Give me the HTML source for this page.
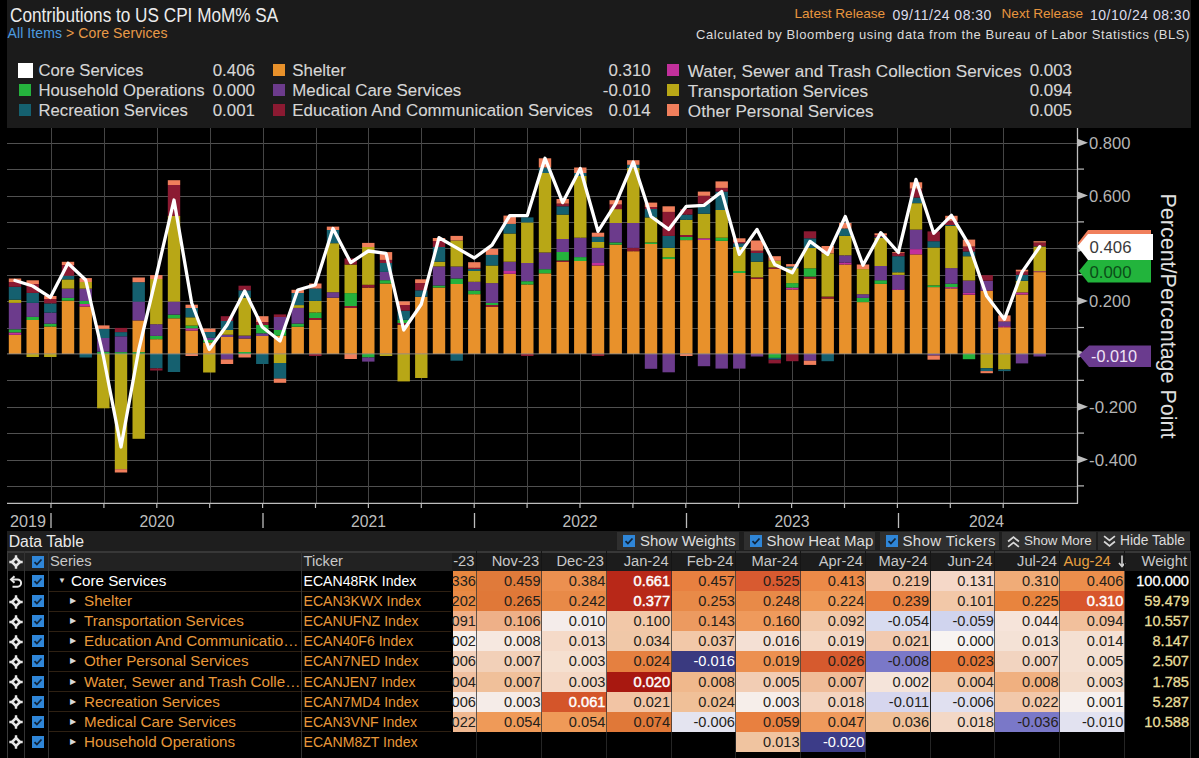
<!DOCTYPE html>
<html><head><meta charset="utf-8">
<style>
html,body{margin:0;padding:0;background:#000;width:1199px;height:758px;overflow:hidden;position:relative;font-family:"Liberation Sans",sans-serif;}
div{box-sizing:border-box;}
#hdr{position:absolute;left:7px;top:0;width:1184px;height:128px;background:#1b1b1b;}
.abs{position:absolute;white-space:nowrap;line-height:1;}
.sq{position:absolute;}
.lg{position:absolute;white-space:nowrap;font-size:16.9px;line-height:22px;color:#d6d6d6;-webkit-text-stroke:0.12px #d6d6d6;}
.lv{width:80px;text-align:right;}
#chart{position:absolute;left:0;top:0;}
#dtbar{position:absolute;left:7px;top:531px;width:1183px;height:20px;background:#1e1e1e;}
.btn{position:absolute;top:532px;height:18px;background:#2f2f2f;}
.bt{position:absolute;top:531px;line-height:20px;white-space:nowrap;color:#dcdcdc;}
.cb{position:absolute;width:12px;height:12px;background:#2f86d8;}
.cb svg{display:block}
.th{position:absolute;height:20px;line-height:20px;font-size:14.7px;color:#c8c8c8;white-space:nowrap;}
.thr{width:100px;text-align:right;}
.td{position:absolute;height:20px;line-height:20px;font-size:15.2px;white-space:nowrap;}
.tk{font-size:14.1px;}
.tv{position:absolute;width:100px;text-align:right;height:20px;line-height:20px;font-size:14.6px;white-space:nowrap;}
.tri{position:absolute;height:20px;line-height:20px;font-size:8px;color:#d8d8d8;}
.ic{position:absolute;height:20px;line-height:20px;font-size:16px;color:#e8e8e8;}
</style></head><body>
<div id="hdr"></div>
<div class="abs" style="left:9.5px;top:4.6px;font-size:20.5px;color:#ececec;letter-spacing:0px;transform:scaleX(0.838);transform-origin:0 0">Contributions to US CPI MoM% SA</div>
<div class="abs" style="left:7.5px;top:26px;font-size:14px;letter-spacing:0.1px"><span style="color:#4d9be0">All Items</span><span style="color:#e89a48"> &gt; Core Services</span></div>
<div class="abs" style="left:794.5px;top:7px;font-size:13.6px;color:#e8953e">Latest Release</div>
<div class="abs" style="left:892.5px;top:8px;font-size:14px;color:#dcdcec;letter-spacing:0.5px">09/11/24 08:30</div>
<div class="abs" style="left:1001.5px;top:7px;font-size:13.6px;color:#e8953e">Next Release</div>
<div class="abs" style="left:1090px;top:8px;font-size:14px;color:#dcdcec;letter-spacing:0.5px">10/10/24 08:30</div>
<div class="abs" style="left:696px;top:27.5px;font-size:13px;letter-spacing:0.585px;color:#dcdcdc">Calculated by Bloomberg using data from the Bureau of Labor Statistics (BLS)</div>
<div class="sq" style="left:17.5px;top:62.5px;width:15px;height:15px;background:#ffffff"></div>
<div class="lg" style="left:38.5px;top:59.5px;font-size:16.7px">Core Services</div>
<div class="lg lv" style="left:175px;top:59.5px">0.406</div>
<div class="sq" style="left:18.5px;top:84px;width:12px;height:12px;background:#25b23d"></div>
<div class="lg" style="left:38.5px;top:79.5px;font-size:16.7px">Household Operations</div>
<div class="lg lv" style="left:175px;top:79.5px">0.000</div>
<div class="sq" style="left:18.5px;top:104px;width:12px;height:12px;background:#15606f"></div>
<div class="lg" style="left:38.5px;top:99.5px;font-size:16.7px">Recreation Services</div>
<div class="lg lv" style="left:175px;top:99.5px">0.001</div>
<div class="sq" style="left:272.7px;top:64px;width:12px;height:12px;background:#e8912b"></div>
<div class="lg" style="left:292.3px;top:59.5px;font-size:16.9px">Shelter</div>
<div class="lg lv" style="left:570.7px;top:59.5px">0.310</div>
<div class="sq" style="left:272.7px;top:84px;width:12px;height:12px;background:#6c3b8c"></div>
<div class="lg" style="left:292.3px;top:79.5px;font-size:16.9px">Medical Care Services</div>
<div class="lg lv" style="left:570.7px;top:79.5px">-0.010</div>
<div class="sq" style="left:272.7px;top:104px;width:12px;height:12px;background:#8b1a32"></div>
<div class="lg" style="left:292.3px;top:99.5px;font-size:16.9px">Education And Communication Services</div>
<div class="lg lv" style="left:570.7px;top:99.5px">0.014</div>
<div class="sq" style="left:667.3px;top:64px;width:12px;height:12px;background:#c2309c"></div>
<div class="lg" style="left:687.8px;top:59.5px;font-size:17.15px">Water, Sewer and Trash Collection Services</div>
<div class="lg lv" style="left:992px;top:59.5px">0.003</div>
<div class="sq" style="left:667.3px;top:84px;width:12px;height:12px;background:#b8a716"></div>
<div class="lg" style="left:687.8px;top:79.5px;font-size:17.15px">Transportation Services</div>
<div class="lg lv" style="left:992px;top:79.5px">0.094</div>
<div class="sq" style="left:667.3px;top:104px;width:12px;height:12px;background:#f07f5c"></div>
<div class="lg" style="left:687.8px;top:99.5px;font-size:17.15px">Other Personal Services</div>
<div class="lg lv" style="left:992px;top:99.5px">0.005</div>
<svg id="chart" width="1199" height="758" viewBox="0 0 1199 758" style="font-family:'Liberation Sans',sans-serif">
<line x1="7" y1="486.5" x2="1077" y2="486.5" stroke="#505050" stroke-width="1"/>
<line x1="7" y1="460.5" x2="1077" y2="460.5" stroke="#505050" stroke-width="1"/>
<line x1="7" y1="433.5" x2="1077" y2="433.5" stroke="#505050" stroke-width="1"/>
<line x1="7" y1="407.5" x2="1077" y2="407.5" stroke="#505050" stroke-width="1"/>
<line x1="7" y1="380.5" x2="1077" y2="380.5" stroke="#505050" stroke-width="1"/>
<line x1="7" y1="328.5" x2="1077" y2="328.5" stroke="#505050" stroke-width="1"/>
<line x1="7" y1="301.5" x2="1077" y2="301.5" stroke="#505050" stroke-width="1"/>
<line x1="7" y1="275.5" x2="1077" y2="275.5" stroke="#505050" stroke-width="1"/>
<line x1="7" y1="248.5" x2="1077" y2="248.5" stroke="#505050" stroke-width="1"/>
<line x1="7" y1="222.5" x2="1077" y2="222.5" stroke="#505050" stroke-width="1"/>
<line x1="7" y1="196.5" x2="1077" y2="196.5" stroke="#505050" stroke-width="1"/>
<line x1="7" y1="169.5" x2="1077" y2="169.5" stroke="#505050" stroke-width="1"/>
<line x1="7" y1="143.5" x2="1077" y2="143.5" stroke="#505050" stroke-width="1"/>
<line x1="51.5" y1="128" x2="51.5" y2="503" stroke="#454545" stroke-width="1"/>
<line x1="104.5" y1="128" x2="104.5" y2="503" stroke="#454545" stroke-width="1"/>
<line x1="157.5" y1="128" x2="157.5" y2="503" stroke="#454545" stroke-width="1"/>
<line x1="210.5" y1="128" x2="210.5" y2="503" stroke="#454545" stroke-width="1"/>
<line x1="263.5" y1="128" x2="263.5" y2="503" stroke="#454545" stroke-width="1"/>
<line x1="316.5" y1="128" x2="316.5" y2="503" stroke="#454545" stroke-width="1"/>
<line x1="368.5" y1="128" x2="368.5" y2="503" stroke="#454545" stroke-width="1"/>
<line x1="421.5" y1="128" x2="421.5" y2="503" stroke="#454545" stroke-width="1"/>
<line x1="474.5" y1="128" x2="474.5" y2="503" stroke="#454545" stroke-width="1"/>
<line x1="527.5" y1="128" x2="527.5" y2="503" stroke="#454545" stroke-width="1"/>
<line x1="580.5" y1="128" x2="580.5" y2="503" stroke="#454545" stroke-width="1"/>
<line x1="633.5" y1="128" x2="633.5" y2="503" stroke="#454545" stroke-width="1"/>
<line x1="686.5" y1="128" x2="686.5" y2="503" stroke="#454545" stroke-width="1"/>
<line x1="739.5" y1="128" x2="739.5" y2="503" stroke="#454545" stroke-width="1"/>
<line x1="792.5" y1="128" x2="792.5" y2="503" stroke="#454545" stroke-width="1"/>
<line x1="844.5" y1="128" x2="844.5" y2="503" stroke="#454545" stroke-width="1"/>
<line x1="897.5" y1="128" x2="897.5" y2="503" stroke="#454545" stroke-width="1"/>
<line x1="950.5" y1="128" x2="950.5" y2="503" stroke="#454545" stroke-width="1"/>
<line x1="1003.5" y1="128" x2="1003.5" y2="503" stroke="#454545" stroke-width="1"/>
<rect x="8.8" y="334.8" width="12.4" height="19.1" fill="#e8912b"/>
<rect x="8.8" y="332.4" width="12.4" height="2.4" fill="#c2309c"/>
<rect x="8.8" y="329.3" width="12.4" height="3.1" fill="#25b23d"/>
<rect x="8.8" y="302.9" width="12.4" height="26.4" fill="#6c3b8c"/>
<rect x="8.8" y="299.7" width="12.4" height="3.2" fill="#b8a716"/>
<rect x="8.8" y="286.8" width="12.4" height="12.9" fill="#15606f"/>
<rect x="8.8" y="282.0" width="12.4" height="4.8" fill="#8b1a32"/>
<rect x="8.8" y="278.5" width="12.4" height="3.5" fill="#f07f5c"/>
<rect x="26.5" y="320.0" width="12.4" height="33.9" fill="#e8912b"/>
<rect x="26.5" y="316.9" width="12.4" height="3.1" fill="#25b23d"/>
<rect x="26.5" y="302.9" width="12.4" height="14.0" fill="#6c3b8c"/>
<rect x="26.5" y="292.9" width="12.4" height="10.0" fill="#15606f"/>
<rect x="26.5" y="284.0" width="12.4" height="8.9" fill="#8b1a32"/>
<rect x="26.5" y="280.3" width="12.4" height="3.7" fill="#f07f5c"/>
<rect x="26.5" y="353.9" width="12.4" height="3.1" fill="#b8a716"/>
<rect x="44.1" y="326.5" width="12.4" height="27.4" fill="#e8912b"/>
<rect x="44.1" y="323.7" width="12.4" height="2.8" fill="#25b23d"/>
<rect x="44.1" y="312.6" width="12.4" height="11.1" fill="#6c3b8c"/>
<rect x="44.1" y="303.4" width="12.4" height="9.2" fill="#15606f"/>
<rect x="44.1" y="299.0" width="12.4" height="4.4" fill="#8b1a32"/>
<rect x="44.1" y="296.0" width="12.4" height="3.0" fill="#f07f5c"/>
<rect x="44.1" y="353.9" width="12.4" height="3.1" fill="#b8a716"/>
<rect x="61.8" y="300.6" width="12.4" height="53.3" fill="#e8912b"/>
<rect x="61.8" y="297.9" width="12.4" height="2.7" fill="#25b23d"/>
<rect x="61.8" y="288.6" width="12.4" height="9.3" fill="#6c3b8c"/>
<rect x="61.8" y="279.4" width="12.4" height="9.2" fill="#b8a716"/>
<rect x="61.8" y="275.7" width="12.4" height="3.7" fill="#15606f"/>
<rect x="61.8" y="265.0" width="12.4" height="10.7" fill="#8b1a32"/>
<rect x="61.8" y="261.8" width="12.4" height="3.2" fill="#f07f5c"/>
<rect x="79.5" y="306.5" width="12.4" height="47.4" fill="#e8912b"/>
<rect x="79.5" y="304.0" width="12.4" height="2.5" fill="#c2309c"/>
<rect x="79.5" y="301.0" width="12.4" height="3.0" fill="#25b23d"/>
<rect x="79.5" y="288.6" width="12.4" height="12.4" fill="#6c3b8c"/>
<rect x="79.5" y="282.0" width="12.4" height="6.6" fill="#b8a716"/>
<rect x="79.5" y="278.1" width="12.4" height="3.9" fill="#f07f5c"/>
<rect x="79.5" y="353.9" width="12.4" height="3.6" fill="#15606f"/>
<rect x="97.1" y="351.7" width="12.4" height="2.2" fill="#25b23d"/>
<rect x="97.1" y="338.0" width="12.4" height="13.7" fill="#6c3b8c"/>
<rect x="97.1" y="328.8" width="12.4" height="9.2" fill="#15606f"/>
<rect x="97.1" y="325.4" width="12.4" height="3.4" fill="#f07f5c"/>
<rect x="97.1" y="353.9" width="12.4" height="54.4" fill="#b8a716"/>
<rect x="114.8" y="352.1" width="12.4" height="1.8" fill="#25b23d"/>
<rect x="114.8" y="336.3" width="12.4" height="15.8" fill="#6c3b8c"/>
<rect x="114.8" y="332.1" width="12.4" height="4.2" fill="#15606f"/>
<rect x="114.8" y="327.9" width="12.4" height="4.2" fill="#8b1a32"/>
<rect x="114.8" y="353.9" width="12.4" height="115.3" fill="#b8a716"/>
<rect x="114.8" y="469.2" width="12.4" height="3.3" fill="#f07f5c"/>
<rect x="132.5" y="352.1" width="12.4" height="1.8" fill="#25b23d"/>
<rect x="132.5" y="320.4" width="12.4" height="31.7" fill="#e8912b"/>
<rect x="132.5" y="301.6" width="12.4" height="18.8" fill="#6c3b8c"/>
<rect x="132.5" y="282.2" width="12.4" height="19.4" fill="#15606f"/>
<rect x="132.5" y="277.5" width="12.4" height="4.7" fill="#f07f5c"/>
<rect x="132.5" y="353.9" width="12.4" height="84.9" fill="#b8a716"/>
<rect x="150.1" y="339.2" width="12.4" height="14.7" fill="#e8912b"/>
<rect x="150.1" y="335.9" width="12.4" height="3.3" fill="#25b23d"/>
<rect x="150.1" y="324.2" width="12.4" height="11.7" fill="#6c3b8c"/>
<rect x="150.1" y="279.0" width="12.4" height="45.2" fill="#b8a716"/>
<rect x="150.1" y="275.1" width="12.4" height="3.9" fill="#f07f5c"/>
<rect x="150.1" y="353.9" width="12.4" height="14.5" fill="#15606f"/>
<rect x="150.1" y="368.4" width="12.4" height="2.1" fill="#8b1a32"/>
<rect x="167.8" y="318.3" width="12.4" height="35.6" fill="#e8912b"/>
<rect x="167.8" y="314.6" width="12.4" height="3.7" fill="#25b23d"/>
<rect x="167.8" y="301.6" width="12.4" height="13.0" fill="#6c3b8c"/>
<rect x="167.8" y="216.0" width="12.4" height="85.6" fill="#b8a716"/>
<rect x="167.8" y="185.0" width="12.4" height="31.0" fill="#8b1a32"/>
<rect x="167.8" y="180.2" width="12.4" height="4.8" fill="#f07f5c"/>
<rect x="167.8" y="353.9" width="12.4" height="18.1" fill="#15606f"/>
<rect x="185.5" y="330.5" width="12.4" height="23.4" fill="#e8912b"/>
<rect x="185.5" y="328.3" width="12.4" height="2.2" fill="#c2309c"/>
<rect x="185.5" y="325.6" width="12.4" height="2.7" fill="#25b23d"/>
<rect x="185.5" y="317.3" width="12.4" height="8.3" fill="#b8a716"/>
<rect x="185.5" y="308.0" width="12.4" height="9.3" fill="#15606f"/>
<rect x="185.5" y="304.7" width="12.4" height="3.3" fill="#f07f5c"/>
<rect x="185.5" y="353.9" width="12.4" height="2.1" fill="#f07f5c"/>
<rect x="203.1" y="342.5" width="12.4" height="11.4" fill="#e8912b"/>
<rect x="203.1" y="340.0" width="12.4" height="2.5" fill="#25b23d"/>
<rect x="203.1" y="337.8" width="12.4" height="2.2" fill="#6c3b8c"/>
<rect x="203.1" y="332.0" width="12.4" height="5.8" fill="#15606f"/>
<rect x="203.1" y="328.6" width="12.4" height="3.4" fill="#f07f5c"/>
<rect x="203.1" y="353.9" width="12.4" height="18.6" fill="#b8a716"/>
<rect x="220.8" y="337.0" width="12.4" height="16.9" fill="#e8912b"/>
<rect x="220.8" y="334.7" width="12.4" height="2.3" fill="#6c3b8c"/>
<rect x="220.8" y="330.0" width="12.4" height="4.7" fill="#b8a716"/>
<rect x="220.8" y="321.0" width="12.4" height="9.0" fill="#15606f"/>
<rect x="220.8" y="316.2" width="12.4" height="4.8" fill="#8b1a32"/>
<rect x="220.8" y="353.9" width="12.4" height="5.5" fill="#6c3b8c"/>
<rect x="220.8" y="359.4" width="12.4" height="4.6" fill="#f07f5c"/>
<rect x="238.5" y="352.0" width="12.4" height="1.9" fill="#25b23d"/>
<rect x="238.5" y="338.5" width="12.4" height="13.5" fill="#e8912b"/>
<rect x="238.5" y="335.6" width="12.4" height="2.9" fill="#6c3b8c"/>
<rect x="238.5" y="297.7" width="12.4" height="37.9" fill="#b8a716"/>
<rect x="238.5" y="290.3" width="12.4" height="7.4" fill="#15606f"/>
<rect x="238.5" y="285.7" width="12.4" height="4.6" fill="#8b1a32"/>
<rect x="238.5" y="353.9" width="12.4" height="3.6" fill="#f07f5c"/>
<rect x="256.1" y="336.0" width="12.4" height="17.9" fill="#e8912b"/>
<rect x="256.1" y="333.3" width="12.4" height="2.7" fill="#6c3b8c"/>
<rect x="256.1" y="325.0" width="12.4" height="8.3" fill="#25b23d"/>
<rect x="256.1" y="322.0" width="12.4" height="3.0" fill="#8b1a32"/>
<rect x="256.1" y="316.2" width="12.4" height="5.8" fill="#f07f5c"/>
<rect x="256.1" y="353.9" width="12.4" height="10.1" fill="#15606f"/>
<rect x="273.8" y="335.6" width="12.4" height="18.3" fill="#e8912b"/>
<rect x="273.8" y="330.0" width="12.4" height="5.6" fill="#25b23d"/>
<rect x="273.8" y="317.0" width="12.4" height="13.0" fill="#6c3b8c"/>
<rect x="273.8" y="314.4" width="12.4" height="2.6" fill="#8b1a32"/>
<rect x="273.8" y="353.9" width="12.4" height="9.1" fill="#b8a716"/>
<rect x="273.8" y="363.0" width="12.4" height="15.6" fill="#15606f"/>
<rect x="273.8" y="378.6" width="12.4" height="4.2" fill="#f07f5c"/>
<rect x="291.5" y="326.7" width="12.4" height="27.2" fill="#e8912b"/>
<rect x="291.5" y="323.6" width="12.4" height="3.1" fill="#25b23d"/>
<rect x="291.5" y="307.9" width="12.4" height="15.7" fill="#6c3b8c"/>
<rect x="291.5" y="305.1" width="12.4" height="2.8" fill="#b8a716"/>
<rect x="291.5" y="293.0" width="12.4" height="12.1" fill="#15606f"/>
<rect x="291.5" y="289.8" width="12.4" height="3.2" fill="#f07f5c"/>
<rect x="309.1" y="320.0" width="12.4" height="33.9" fill="#e8912b"/>
<rect x="309.1" y="318.0" width="12.4" height="2.0" fill="#8b1a32"/>
<rect x="309.1" y="312.5" width="12.4" height="5.5" fill="#25b23d"/>
<rect x="309.1" y="300.9" width="12.4" height="11.6" fill="#b8a716"/>
<rect x="309.1" y="288.5" width="12.4" height="12.4" fill="#15606f"/>
<rect x="309.1" y="283.5" width="12.4" height="5.0" fill="#f07f5c"/>
<rect x="309.1" y="353.9" width="12.4" height="2.1" fill="#8b1a32"/>
<rect x="326.8" y="297.7" width="12.4" height="56.2" fill="#e8912b"/>
<rect x="326.8" y="292.2" width="12.4" height="5.5" fill="#6c3b8c"/>
<rect x="326.8" y="243.2" width="12.4" height="49.0" fill="#b8a716"/>
<rect x="326.8" y="230.0" width="12.4" height="13.2" fill="#15606f"/>
<rect x="326.8" y="226.6" width="12.4" height="3.4" fill="#f07f5c"/>
<rect x="344.5" y="308.0" width="12.4" height="45.9" fill="#e8912b"/>
<rect x="344.5" y="306.0" width="12.4" height="2.0" fill="#8b1a32"/>
<rect x="344.5" y="293.1" width="12.4" height="12.9" fill="#25b23d"/>
<rect x="344.5" y="264.5" width="12.4" height="28.6" fill="#b8a716"/>
<rect x="344.5" y="258.4" width="12.4" height="6.1" fill="#8b1a32"/>
<rect x="344.5" y="353.9" width="12.4" height="5.1" fill="#f07f5c"/>
<rect x="362.1" y="287.6" width="12.4" height="66.3" fill="#e8912b"/>
<rect x="362.1" y="284.8" width="12.4" height="2.8" fill="#8b1a32"/>
<rect x="362.1" y="247.0" width="12.4" height="37.8" fill="#b8a716"/>
<rect x="362.1" y="242.9" width="12.4" height="4.1" fill="#f07f5c"/>
<rect x="362.1" y="353.9" width="12.4" height="3.6" fill="#25b23d"/>
<rect x="362.1" y="357.5" width="12.4" height="4.1" fill="#6c3b8c"/>
<rect x="379.8" y="283.5" width="12.4" height="70.4" fill="#e8912b"/>
<rect x="379.8" y="280.2" width="12.4" height="3.3" fill="#25b23d"/>
<rect x="379.8" y="271.9" width="12.4" height="8.3" fill="#6c3b8c"/>
<rect x="379.8" y="263.0" width="12.4" height="8.9" fill="#15606f"/>
<rect x="379.8" y="259.9" width="12.4" height="3.1" fill="#8b1a32"/>
<rect x="379.8" y="252.1" width="12.4" height="7.8" fill="#f07f5c"/>
<rect x="379.8" y="353.9" width="12.4" height="2.1" fill="#b8a716"/>
<rect x="397.5" y="325.0" width="12.4" height="28.9" fill="#e8912b"/>
<rect x="397.5" y="323.0" width="12.4" height="2.0" fill="#8b1a32"/>
<rect x="397.5" y="319.9" width="12.4" height="3.1" fill="#25b23d"/>
<rect x="397.5" y="310.7" width="12.4" height="9.2" fill="#15606f"/>
<rect x="397.5" y="305.0" width="12.4" height="5.7" fill="#8b1a32"/>
<rect x="397.5" y="301.4" width="12.4" height="3.6" fill="#f07f5c"/>
<rect x="397.5" y="353.9" width="12.4" height="27.5" fill="#b8a716"/>
<rect x="415.1" y="296.8" width="12.4" height="57.1" fill="#e8912b"/>
<rect x="415.1" y="290.3" width="12.4" height="6.5" fill="#15606f"/>
<rect x="415.1" y="283.0" width="12.4" height="7.3" fill="#8b1a32"/>
<rect x="415.1" y="279.3" width="12.4" height="3.7" fill="#f07f5c"/>
<rect x="415.1" y="353.9" width="12.4" height="24.1" fill="#b8a716"/>
<rect x="432.8" y="287.5" width="12.4" height="66.4" fill="#e8912b"/>
<rect x="432.8" y="285.5" width="12.4" height="2.0" fill="#25b23d"/>
<rect x="432.8" y="266.4" width="12.4" height="19.1" fill="#6c3b8c"/>
<rect x="432.8" y="261.7" width="12.4" height="4.7" fill="#b8a716"/>
<rect x="432.8" y="247.0" width="12.4" height="14.7" fill="#15606f"/>
<rect x="432.8" y="241.0" width="12.4" height="6.0" fill="#8b1a32"/>
<rect x="432.8" y="238.0" width="12.4" height="3.0" fill="#f07f5c"/>
<rect x="450.5" y="284.0" width="12.4" height="69.9" fill="#e8912b"/>
<rect x="450.5" y="278.5" width="12.4" height="5.5" fill="#25b23d"/>
<rect x="450.5" y="266.5" width="12.4" height="12.0" fill="#6c3b8c"/>
<rect x="450.5" y="240.5" width="12.4" height="26.0" fill="#b8a716"/>
<rect x="450.5" y="235.9" width="12.4" height="4.6" fill="#f07f5c"/>
<rect x="450.5" y="353.9" width="12.4" height="6.8" fill="#15606f"/>
<rect x="468.1" y="294.2" width="12.4" height="59.7" fill="#e8912b"/>
<rect x="468.1" y="290.5" width="12.4" height="3.7" fill="#25b23d"/>
<rect x="468.1" y="281.8" width="12.4" height="8.7" fill="#6c3b8c"/>
<rect x="468.1" y="271.0" width="12.4" height="10.8" fill="#b8a716"/>
<rect x="468.1" y="269.0" width="12.4" height="2.0" fill="#15606f"/>
<rect x="468.1" y="267.8" width="12.4" height="1.2" fill="#8b1a32"/>
<rect x="468.1" y="262.2" width="12.4" height="5.6" fill="#f07f5c"/>
<rect x="485.8" y="307.0" width="12.4" height="46.9" fill="#e8912b"/>
<rect x="485.8" y="305.0" width="12.4" height="2.0" fill="#8b1a32"/>
<rect x="485.8" y="302.9" width="12.4" height="2.1" fill="#25b23d"/>
<rect x="485.8" y="283.1" width="12.4" height="19.8" fill="#6c3b8c"/>
<rect x="485.8" y="265.5" width="12.4" height="17.6" fill="#b8a716"/>
<rect x="485.8" y="254.9" width="12.4" height="10.6" fill="#15606f"/>
<rect x="485.8" y="248.8" width="12.4" height="6.1" fill="#f07f5c"/>
<rect x="503.5" y="273.8" width="12.4" height="80.1" fill="#e8912b"/>
<rect x="503.5" y="271.0" width="12.4" height="2.8" fill="#c2309c"/>
<rect x="503.5" y="261.7" width="12.4" height="9.3" fill="#6c3b8c"/>
<rect x="503.5" y="233.5" width="12.4" height="28.2" fill="#b8a716"/>
<rect x="503.5" y="223.9" width="12.4" height="9.6" fill="#15606f"/>
<rect x="503.5" y="215.6" width="12.4" height="8.3" fill="#f07f5c"/>
<rect x="521.1" y="284.4" width="12.4" height="69.5" fill="#e8912b"/>
<rect x="521.1" y="281.2" width="12.4" height="3.2" fill="#25b23d"/>
<rect x="521.1" y="263.0" width="12.4" height="18.2" fill="#6c3b8c"/>
<rect x="521.1" y="222.4" width="12.4" height="40.6" fill="#b8a716"/>
<rect x="521.1" y="217.4" width="12.4" height="5.0" fill="#15606f"/>
<rect x="521.1" y="353.9" width="12.4" height="2.1" fill="#8b1a32"/>
<rect x="538.8" y="273.3" width="12.4" height="80.6" fill="#e8912b"/>
<rect x="538.8" y="269.2" width="12.4" height="4.1" fill="#25b23d"/>
<rect x="538.8" y="252.5" width="12.4" height="16.7" fill="#6c3b8c"/>
<rect x="538.8" y="173.0" width="12.4" height="79.5" fill="#b8a716"/>
<rect x="538.8" y="167.5" width="12.4" height="5.5" fill="#15606f"/>
<rect x="538.8" y="158.3" width="12.4" height="9.2" fill="#f07f5c"/>
<rect x="556.5" y="262.0" width="12.4" height="91.9" fill="#e8912b"/>
<rect x="556.5" y="260.5" width="12.4" height="1.5" fill="#8b1a32"/>
<rect x="556.5" y="252.0" width="12.4" height="8.5" fill="#25b23d"/>
<rect x="556.5" y="239.0" width="12.4" height="13.0" fill="#6c3b8c"/>
<rect x="556.5" y="214.6" width="12.4" height="24.4" fill="#b8a716"/>
<rect x="556.5" y="206.3" width="12.4" height="8.3" fill="#15606f"/>
<rect x="556.5" y="203.6" width="12.4" height="2.7" fill="#8b1a32"/>
<rect x="556.5" y="199.0" width="12.4" height="4.6" fill="#f07f5c"/>
<rect x="574.1" y="261.0" width="12.4" height="92.9" fill="#e8912b"/>
<rect x="574.1" y="257.1" width="12.4" height="3.9" fill="#25b23d"/>
<rect x="574.1" y="237.7" width="12.4" height="19.4" fill="#6c3b8c"/>
<rect x="574.1" y="176.0" width="12.4" height="61.7" fill="#b8a716"/>
<rect x="574.1" y="173.0" width="12.4" height="3.0" fill="#15606f"/>
<rect x="574.1" y="167.5" width="12.4" height="5.5" fill="#f07f5c"/>
<rect x="591.8" y="265.5" width="12.4" height="88.4" fill="#e8912b"/>
<rect x="591.8" y="263.0" width="12.4" height="2.5" fill="#c2309c"/>
<rect x="591.8" y="247.9" width="12.4" height="15.1" fill="#6c3b8c"/>
<rect x="591.8" y="242.0" width="12.4" height="5.9" fill="#b8a716"/>
<rect x="591.8" y="236.8" width="12.4" height="5.2" fill="#15606f"/>
<rect x="591.8" y="232.7" width="12.4" height="4.1" fill="#f07f5c"/>
<rect x="591.8" y="353.9" width="12.4" height="2.1" fill="#8b1a32"/>
<rect x="609.5" y="244.6" width="12.4" height="109.3" fill="#e8912b"/>
<rect x="609.5" y="242.4" width="12.4" height="2.2" fill="#25b23d"/>
<rect x="609.5" y="223.0" width="12.4" height="19.4" fill="#6c3b8c"/>
<rect x="609.5" y="209.1" width="12.4" height="13.9" fill="#b8a716"/>
<rect x="609.5" y="204.5" width="12.4" height="4.6" fill="#8b1a32"/>
<rect x="609.5" y="200.2" width="12.4" height="4.3" fill="#f07f5c"/>
<rect x="627.1" y="251.2" width="12.4" height="102.7" fill="#e8912b"/>
<rect x="627.1" y="247.9" width="12.4" height="3.3" fill="#8b1a32"/>
<rect x="627.1" y="223.0" width="12.4" height="24.9" fill="#6c3b8c"/>
<rect x="627.1" y="168.0" width="12.4" height="55.0" fill="#b8a716"/>
<rect x="627.1" y="164.8" width="12.4" height="3.2" fill="#15606f"/>
<rect x="627.1" y="160.2" width="12.4" height="4.6" fill="#f07f5c"/>
<rect x="644.8" y="244.0" width="12.4" height="109.9" fill="#e8912b"/>
<rect x="644.8" y="242.4" width="12.4" height="1.6" fill="#25b23d"/>
<rect x="644.8" y="217.4" width="12.4" height="25.0" fill="#b8a716"/>
<rect x="644.8" y="209.0" width="12.4" height="8.4" fill="#15606f"/>
<rect x="644.8" y="207.0" width="12.4" height="2.0" fill="#8b1a32"/>
<rect x="644.8" y="202.6" width="12.4" height="4.4" fill="#f07f5c"/>
<rect x="644.8" y="353.9" width="12.4" height="14.9" fill="#6c3b8c"/>
<rect x="662.5" y="259.0" width="12.4" height="94.9" fill="#e8912b"/>
<rect x="662.5" y="257.1" width="12.4" height="1.9" fill="#25b23d"/>
<rect x="662.5" y="247.9" width="12.4" height="9.2" fill="#b8a716"/>
<rect x="662.5" y="235.9" width="12.4" height="12.0" fill="#15606f"/>
<rect x="662.5" y="211.9" width="12.4" height="24.0" fill="#8b1a32"/>
<rect x="662.5" y="206.3" width="12.4" height="5.6" fill="#f07f5c"/>
<rect x="662.5" y="353.9" width="12.4" height="18.4" fill="#6c3b8c"/>
<rect x="680.1" y="240.1" width="12.4" height="113.8" fill="#e8912b"/>
<rect x="680.1" y="237.0" width="12.4" height="3.1" fill="#25b23d"/>
<rect x="680.1" y="235.0" width="12.4" height="2.0" fill="#8b1a32"/>
<rect x="680.1" y="219.8" width="12.4" height="15.2" fill="#b8a716"/>
<rect x="680.1" y="214.6" width="12.4" height="5.2" fill="#15606f"/>
<rect x="680.1" y="209.1" width="12.4" height="5.5" fill="#8b1a32"/>
<rect x="680.1" y="353.9" width="12.4" height="2.1" fill="#f07f5c"/>
<rect x="697.8" y="240.0" width="12.4" height="113.9" fill="#e8912b"/>
<rect x="697.8" y="238.3" width="12.4" height="1.7" fill="#c2309c"/>
<rect x="697.8" y="213.7" width="12.4" height="24.6" fill="#b8a716"/>
<rect x="697.8" y="203.6" width="12.4" height="10.1" fill="#15606f"/>
<rect x="697.8" y="195.8" width="12.4" height="7.8" fill="#8b1a32"/>
<rect x="697.8" y="191.6" width="12.4" height="4.2" fill="#f07f5c"/>
<rect x="697.8" y="353.9" width="12.4" height="12.3" fill="#6c3b8c"/>
<rect x="715.5" y="240.9" width="12.4" height="113.0" fill="#e8912b"/>
<rect x="715.5" y="237.7" width="12.4" height="3.2" fill="#25b23d"/>
<rect x="715.5" y="210.0" width="12.4" height="27.7" fill="#b8a716"/>
<rect x="715.5" y="191.6" width="12.4" height="18.4" fill="#15606f"/>
<rect x="715.5" y="187.9" width="12.4" height="3.7" fill="#8b1a32"/>
<rect x="715.5" y="181.4" width="12.4" height="6.5" fill="#f07f5c"/>
<rect x="715.5" y="353.9" width="12.4" height="14.7" fill="#6c3b8c"/>
<rect x="733.1" y="273.0" width="12.4" height="80.9" fill="#e8912b"/>
<rect x="733.1" y="271.0" width="12.4" height="2.0" fill="#25b23d"/>
<rect x="733.1" y="247.0" width="12.4" height="24.0" fill="#b8a716"/>
<rect x="733.1" y="243.3" width="12.4" height="3.7" fill="#15606f"/>
<rect x="733.1" y="242.0" width="12.4" height="1.3" fill="#8b1a32"/>
<rect x="733.1" y="238.3" width="12.4" height="3.7" fill="#f07f5c"/>
<rect x="733.1" y="353.9" width="12.4" height="14.7" fill="#6c3b8c"/>
<rect x="750.8" y="279.0" width="12.4" height="74.9" fill="#e8912b"/>
<rect x="750.8" y="277.4" width="12.4" height="1.6" fill="#8b1a32"/>
<rect x="750.8" y="261.7" width="12.4" height="15.7" fill="#b8a716"/>
<rect x="750.8" y="253.0" width="12.4" height="8.7" fill="#15606f"/>
<rect x="750.8" y="250.7" width="12.4" height="2.3" fill="#8b1a32"/>
<rect x="750.8" y="240.5" width="12.4" height="10.2" fill="#f07f5c"/>
<rect x="750.8" y="353.9" width="12.4" height="2.6" fill="#6c3b8c"/>
<rect x="768.5" y="269.0" width="12.4" height="84.9" fill="#e8912b"/>
<rect x="768.5" y="267.4" width="12.4" height="1.6" fill="#8b1a32"/>
<rect x="768.5" y="260.8" width="12.4" height="6.6" fill="#b8a716"/>
<rect x="768.5" y="256.2" width="12.4" height="4.6" fill="#f07f5c"/>
<rect x="768.5" y="353.9" width="12.4" height="4.0" fill="#25b23d"/>
<rect x="768.5" y="357.9" width="12.4" height="1.8" fill="#15606f"/>
<rect x="768.5" y="359.7" width="12.4" height="3.7" fill="#8b1a32"/>
<rect x="786.1" y="289.5" width="12.4" height="64.4" fill="#e8912b"/>
<rect x="786.1" y="287.6" width="12.4" height="1.9" fill="#c2309c"/>
<rect x="786.1" y="283.1" width="12.4" height="4.5" fill="#25b23d"/>
<rect x="786.1" y="268.2" width="12.4" height="14.9" fill="#b8a716"/>
<rect x="786.1" y="266.5" width="12.4" height="1.7" fill="#15606f"/>
<rect x="786.1" y="264.1" width="12.4" height="2.4" fill="#f07f5c"/>
<rect x="786.1" y="353.9" width="12.4" height="7.3" fill="#8b1a32"/>
<rect x="803.8" y="278.5" width="12.4" height="75.4" fill="#e8912b"/>
<rect x="803.8" y="276.6" width="12.4" height="1.9" fill="#8b1a32"/>
<rect x="803.8" y="268.3" width="12.4" height="8.3" fill="#25b23d"/>
<rect x="803.8" y="247.9" width="12.4" height="20.4" fill="#b8a716"/>
<rect x="803.8" y="238.3" width="12.4" height="9.6" fill="#15606f"/>
<rect x="803.8" y="231.3" width="12.4" height="7.0" fill="#8b1a32"/>
<rect x="803.8" y="353.9" width="12.4" height="6.8" fill="#6c3b8c"/>
<rect x="803.8" y="360.7" width="12.4" height="4.2" fill="#f07f5c"/>
<rect x="821.5" y="298.5" width="12.4" height="55.4" fill="#e8912b"/>
<rect x="821.5" y="296.6" width="12.4" height="1.9" fill="#8b1a32"/>
<rect x="821.5" y="253.4" width="12.4" height="43.2" fill="#b8a716"/>
<rect x="821.5" y="246.0" width="12.4" height="7.4" fill="#f07f5c"/>
<rect x="821.5" y="353.9" width="12.4" height="7.3" fill="#15606f"/>
<rect x="839.1" y="264.5" width="12.4" height="89.4" fill="#e8912b"/>
<rect x="839.1" y="262.5" width="12.4" height="2.0" fill="#c2309c"/>
<rect x="839.1" y="255.3" width="12.4" height="7.2" fill="#6c3b8c"/>
<rect x="839.1" y="235.9" width="12.4" height="19.4" fill="#b8a716"/>
<rect x="839.1" y="228.5" width="12.4" height="7.4" fill="#15606f"/>
<rect x="839.1" y="223.0" width="12.4" height="5.5" fill="#f07f5c"/>
<rect x="856.8" y="302.1" width="12.4" height="51.8" fill="#e8912b"/>
<rect x="856.8" y="297.9" width="12.4" height="4.2" fill="#25b23d"/>
<rect x="856.8" y="294.2" width="12.4" height="3.7" fill="#6c3b8c"/>
<rect x="856.8" y="269.1" width="12.4" height="25.1" fill="#b8a716"/>
<rect x="856.8" y="264.5" width="12.4" height="4.6" fill="#f07f5c"/>
<rect x="874.5" y="283.9" width="12.4" height="70.0" fill="#e8912b"/>
<rect x="874.5" y="280.2" width="12.4" height="3.7" fill="#25b23d"/>
<rect x="874.5" y="266.0" width="12.4" height="14.3" fill="#6c3b8c"/>
<rect x="874.5" y="238.0" width="12.4" height="28.0" fill="#b8a716"/>
<rect x="874.5" y="237.2" width="12.4" height="0.8" fill="#15606f"/>
<rect x="874.5" y="235.1" width="12.4" height="2.1" fill="#8b1a32"/>
<rect x="874.5" y="233.3" width="12.4" height="1.8" fill="#f07f5c"/>
<rect x="892.2" y="290.0" width="12.4" height="63.9" fill="#e8912b"/>
<rect x="892.2" y="289.2" width="12.4" height="0.8" fill="#c2309c"/>
<rect x="892.2" y="275.0" width="12.4" height="14.3" fill="#6c3b8c"/>
<rect x="892.2" y="272.3" width="12.4" height="2.6" fill="#b8a716"/>
<rect x="892.2" y="256.2" width="12.4" height="16.1" fill="#15606f"/>
<rect x="892.2" y="252.8" width="12.4" height="3.4" fill="#8b1a32"/>
<rect x="892.2" y="252.0" width="12.4" height="0.8" fill="#f07f5c"/>
<rect x="909.8" y="254.4" width="12.4" height="99.5" fill="#e8912b"/>
<rect x="909.8" y="249.1" width="12.4" height="5.3" fill="#c2309c"/>
<rect x="909.8" y="229.6" width="12.4" height="19.5" fill="#6c3b8c"/>
<rect x="909.8" y="203.2" width="12.4" height="26.4" fill="#b8a716"/>
<rect x="909.8" y="197.6" width="12.4" height="5.5" fill="#15606f"/>
<rect x="909.8" y="188.6" width="12.4" height="9.0" fill="#8b1a32"/>
<rect x="909.8" y="182.3" width="12.4" height="6.3" fill="#f07f5c"/>
<rect x="927.5" y="287.1" width="12.4" height="66.8" fill="#e8912b"/>
<rect x="927.5" y="285.3" width="12.4" height="1.8" fill="#25b23d"/>
<rect x="927.5" y="353.9" width="12.4" height="1.6" fill="#6c3b8c"/>
<rect x="927.5" y="247.5" width="12.4" height="37.8" fill="#b8a716"/>
<rect x="927.5" y="241.2" width="12.4" height="6.3" fill="#15606f"/>
<rect x="927.5" y="231.4" width="12.4" height="9.8" fill="#8b1a32"/>
<rect x="927.5" y="355.5" width="12.4" height="4.2" fill="#f07f5c"/>
<rect x="945.2" y="288.4" width="12.4" height="65.5" fill="#e8912b"/>
<rect x="945.2" y="287.1" width="12.4" height="1.3" fill="#c2309c"/>
<rect x="945.2" y="283.7" width="12.4" height="3.4" fill="#25b23d"/>
<rect x="945.2" y="268.1" width="12.4" height="15.6" fill="#6c3b8c"/>
<rect x="945.2" y="225.9" width="12.4" height="42.2" fill="#b8a716"/>
<rect x="945.2" y="225.1" width="12.4" height="0.8" fill="#15606f"/>
<rect x="945.2" y="220.8" width="12.4" height="4.2" fill="#8b1a32"/>
<rect x="945.2" y="215.8" width="12.4" height="5.0" fill="#f07f5c"/>
<rect x="962.8" y="294.8" width="12.4" height="59.1" fill="#e8912b"/>
<rect x="962.8" y="292.9" width="12.4" height="1.8" fill="#c2309c"/>
<rect x="962.8" y="353.9" width="12.4" height="5.3" fill="#25b23d"/>
<rect x="962.8" y="280.5" width="12.4" height="12.4" fill="#6c3b8c"/>
<rect x="962.8" y="256.2" width="12.4" height="24.3" fill="#b8a716"/>
<rect x="962.8" y="251.5" width="12.4" height="4.8" fill="#15606f"/>
<rect x="962.8" y="246.5" width="12.4" height="5.0" fill="#8b1a32"/>
<rect x="962.8" y="239.6" width="12.4" height="6.9" fill="#f07f5c"/>
<rect x="980.5" y="290.8" width="12.4" height="63.1" fill="#e8912b"/>
<rect x="980.5" y="290.3" width="12.4" height="0.5" fill="#c2309c"/>
<rect x="980.5" y="280.8" width="12.4" height="9.5" fill="#6c3b8c"/>
<rect x="980.5" y="353.9" width="12.4" height="14.3" fill="#b8a716"/>
<rect x="980.5" y="368.2" width="12.4" height="2.9" fill="#15606f"/>
<rect x="980.5" y="275.2" width="12.4" height="5.5" fill="#8b1a32"/>
<rect x="980.5" y="371.1" width="12.4" height="2.1" fill="#f07f5c"/>
<rect x="998.2" y="327.2" width="12.4" height="26.7" fill="#e8912b"/>
<rect x="998.2" y="326.2" width="12.4" height="1.1" fill="#c2309c"/>
<rect x="998.2" y="321.4" width="12.4" height="4.8" fill="#6c3b8c"/>
<rect x="998.2" y="353.9" width="12.4" height="15.6" fill="#b8a716"/>
<rect x="998.2" y="369.5" width="12.4" height="1.6" fill="#15606f"/>
<rect x="998.2" y="315.4" width="12.4" height="6.1" fill="#f07f5c"/>
<rect x="1015.8" y="294.5" width="12.4" height="59.4" fill="#e8912b"/>
<rect x="1015.8" y="292.4" width="12.4" height="2.1" fill="#c2309c"/>
<rect x="1015.8" y="353.9" width="12.4" height="9.5" fill="#6c3b8c"/>
<rect x="1015.8" y="280.8" width="12.4" height="11.6" fill="#b8a716"/>
<rect x="1015.8" y="275.0" width="12.4" height="5.8" fill="#15606f"/>
<rect x="1015.8" y="271.5" width="12.4" height="3.4" fill="#8b1a32"/>
<rect x="1015.8" y="269.7" width="12.4" height="1.8" fill="#f07f5c"/>
<rect x="1033.5" y="272.1" width="12.4" height="81.8" fill="#e8912b"/>
<rect x="1033.5" y="271.3" width="12.4" height="0.8" fill="#c2309c"/>
<rect x="1033.5" y="353.9" width="12.4" height="2.6" fill="#6c3b8c"/>
<rect x="1033.5" y="246.5" width="12.4" height="24.8" fill="#b8a716"/>
<rect x="1033.5" y="246.2" width="12.4" height="0.3" fill="#15606f"/>
<rect x="1033.5" y="242.5" width="12.4" height="3.7" fill="#8b1a32"/>
<rect x="1033.5" y="241.2" width="12.4" height="1.3" fill="#f07f5c"/>
<line x1="7" y1="353.9" x2="1077" y2="353.9" stroke="#9a9a9a" stroke-width="1" opacity="0.8"/>
<polyline points="15.0,280.5 32.7,286.0 50.3,297.4 68.0,263.3 85.7,280.0 103.3,356.0 121.0,447.0 138.7,350.0 156.3,276.0 174.0,200.0 191.7,303.0 209.3,349.5 227.0,325.0 244.7,291.0 262.3,327.0 280.0,341.0 297.7,290.0 315.3,284.8 333.0,228.5 350.7,262.6 368.3,251.0 386.0,253.4 403.7,330.0 421.3,304.2 439.0,237.7 456.7,247.9 474.3,258.0 492.0,245.1 509.7,215.6 527.3,215.6 545.0,158.3 562.7,202.6 580.3,168.5 598.0,231.3 615.7,203.6 633.3,162.0 651.0,216.5 668.7,229.4 686.3,206.3 704.0,205.4 721.7,191.6 739.3,254.4 757.0,229.4 774.7,264.5 792.3,272.8 810.0,241.4 827.7,254.4 845.3,216.5 863.0,265.2 880.7,232.7 898.4,252.5 916.0,179.4 933.7,233.3 951.4,215.3 969.0,244.9 986.7,296.1 1004.4,319.3 1022.0,272.1 1039.7,246.7" fill="none" stroke="#ffffff" stroke-width="3.3" stroke-linejoin="round" stroke-linecap="round"/>
<line x1="1077.5" y1="128" x2="1077.5" y2="503.5" stroke="#bdbdbd" stroke-width="1.3"/>
<line x1="7" y1="503.3" x2="1078" y2="503.3" stroke="#bdbdbd" stroke-width="1.3"/>
<line x1="1077" y1="485.9" x2="1084" y2="485.9" stroke="#bdbdbd" stroke-width="1.2"/>
<polygon points="1077.5,455.5 1088,459.5 1077.5,463.5" fill="#bdbdbd"/>
<line x1="1077" y1="433.1" x2="1084" y2="433.1" stroke="#bdbdbd" stroke-width="1.2"/>
<polygon points="1077.5,402.7 1088,406.7 1077.5,410.7" fill="#bdbdbd"/>
<line x1="1077" y1="380.3" x2="1084" y2="380.3" stroke="#bdbdbd" stroke-width="1.2"/>
<polygon points="1077.5,349.9 1088,353.9 1077.5,357.9" fill="#bdbdbd"/>
<line x1="1077" y1="327.5" x2="1084" y2="327.5" stroke="#bdbdbd" stroke-width="1.2"/>
<polygon points="1077.5,297.1 1088,301.1 1077.5,305.1" fill="#bdbdbd"/>
<line x1="1077" y1="274.7" x2="1084" y2="274.7" stroke="#bdbdbd" stroke-width="1.2"/>
<polygon points="1077.5,244.3 1088,248.3 1077.5,252.3" fill="#bdbdbd"/>
<line x1="1077" y1="221.9" x2="1084" y2="221.9" stroke="#bdbdbd" stroke-width="1.2"/>
<polygon points="1077.5,191.5 1088,195.5 1077.5,199.5" fill="#bdbdbd"/>
<line x1="1077" y1="169.1" x2="1084" y2="169.1" stroke="#bdbdbd" stroke-width="1.2"/>
<polygon points="1077.5,138.7 1088,142.7 1077.5,146.7" fill="#bdbdbd"/>
<text x="1089" y="148.7" fill="#b4b4b4" font-size="16.5" textLength="41.5" lengthAdjust="spacingAndGlyphs">0.800</text>
<text x="1089" y="201.5" fill="#b4b4b4" font-size="16.5" textLength="41.5" lengthAdjust="spacingAndGlyphs">0.600</text>
<text x="1089" y="307.1" fill="#b4b4b4" font-size="16.5" textLength="41.5" lengthAdjust="spacingAndGlyphs">0.200</text>
<text x="1089" y="412.7" fill="#b4b4b4" font-size="16.5" textLength="48" lengthAdjust="spacingAndGlyphs">-0.200</text>
<text x="1089" y="465.5" fill="#b4b4b4" font-size="16.5" textLength="48" lengthAdjust="spacingAndGlyphs">-0.400</text>
<line x1="51.0" y1="503" x2="51.0" y2="508" stroke="#bdbdbd" stroke-width="1.2"/>
<line x1="103.9" y1="503" x2="103.9" y2="508" stroke="#bdbdbd" stroke-width="1.2"/>
<line x1="156.8" y1="503" x2="156.8" y2="508" stroke="#bdbdbd" stroke-width="1.2"/>
<line x1="209.7" y1="503" x2="209.7" y2="508" stroke="#bdbdbd" stroke-width="1.2"/>
<line x1="262.6" y1="503" x2="262.6" y2="508" stroke="#bdbdbd" stroke-width="1.2"/>
<line x1="315.5" y1="503" x2="315.5" y2="508" stroke="#bdbdbd" stroke-width="1.2"/>
<line x1="368.4" y1="503" x2="368.4" y2="508" stroke="#bdbdbd" stroke-width="1.2"/>
<line x1="421.3" y1="503" x2="421.3" y2="508" stroke="#bdbdbd" stroke-width="1.2"/>
<line x1="474.2" y1="503" x2="474.2" y2="508" stroke="#bdbdbd" stroke-width="1.2"/>
<line x1="527.1" y1="503" x2="527.1" y2="508" stroke="#bdbdbd" stroke-width="1.2"/>
<line x1="580.0" y1="503" x2="580.0" y2="508" stroke="#bdbdbd" stroke-width="1.2"/>
<line x1="632.9" y1="503" x2="632.9" y2="508" stroke="#bdbdbd" stroke-width="1.2"/>
<line x1="685.8" y1="503" x2="685.8" y2="508" stroke="#bdbdbd" stroke-width="1.2"/>
<line x1="738.7" y1="503" x2="738.7" y2="508" stroke="#bdbdbd" stroke-width="1.2"/>
<line x1="791.6" y1="503" x2="791.6" y2="508" stroke="#bdbdbd" stroke-width="1.2"/>
<line x1="844.5" y1="503" x2="844.5" y2="508" stroke="#bdbdbd" stroke-width="1.2"/>
<line x1="897.4" y1="503" x2="897.4" y2="508" stroke="#bdbdbd" stroke-width="1.2"/>
<line x1="950.3" y1="503" x2="950.3" y2="508" stroke="#bdbdbd" stroke-width="1.2"/>
<line x1="1003.2" y1="503" x2="1003.2" y2="508" stroke="#bdbdbd" stroke-width="1.2"/>
<line x1="51" y1="513" x2="51" y2="528" stroke="#bdbdbd" stroke-width="1.3"/>
<line x1="263" y1="513" x2="263" y2="528" stroke="#bdbdbd" stroke-width="1.3"/>
<line x1="474.5" y1="513" x2="474.5" y2="528" stroke="#bdbdbd" stroke-width="1.3"/>
<line x1="686.5" y1="513" x2="686.5" y2="528" stroke="#bdbdbd" stroke-width="1.3"/>
<line x1="898.5" y1="513" x2="898.5" y2="528" stroke="#bdbdbd" stroke-width="1.3"/>
<text x="157" y="527" fill="#bdbdbd" font-size="16.5" text-anchor="middle" textLength="35" lengthAdjust="spacingAndGlyphs">2020</text>
<text x="368.5" y="527" fill="#bdbdbd" font-size="16.5" text-anchor="middle" textLength="35" lengthAdjust="spacingAndGlyphs">2021</text>
<text x="580" y="527" fill="#bdbdbd" font-size="16.5" text-anchor="middle" textLength="35" lengthAdjust="spacingAndGlyphs">2022</text>
<text x="792" y="527" fill="#bdbdbd" font-size="16.5" text-anchor="middle" textLength="35" lengthAdjust="spacingAndGlyphs">2023</text>
<text x="986.5" y="527" fill="#bdbdbd" font-size="16.5" text-anchor="middle" textLength="35" lengthAdjust="spacingAndGlyphs">2024</text>
<text x="10" y="527" fill="#bdbdbd" font-size="16.5" textLength="36" lengthAdjust="spacingAndGlyphs">2019</text>
<polygon points="1088,230 1151,230 1151,256 1088,256 1078,243" fill="#f07f5c"/>
<polygon points="1088,234 1153,234 1153,260 1088,260 1077.5,246.5" fill="#ffffff"/>
<text x="1089.5" y="252.5" fill="#3a3a3a" font-size="16.5" textLength="42" lengthAdjust="spacingAndGlyphs">0.406</text>
<polygon points="1088,260 1151,260 1151,282.5 1088,282.5 1079,271" fill="#22b43c"/>
<text x="1089.5" y="277.5" fill="#0b4d18" font-size="16.5" textLength="42" lengthAdjust="spacingAndGlyphs">0.000</text>
<polygon points="1089,345.5 1151,345.5 1151,367 1089,367 1079,355" fill="#6a3b8e"/>
<text x="1091" y="361.5" fill="#f0e4f6" font-size="16" textLength="46" lengthAdjust="spacingAndGlyphs">-0.010</text>
<text x="0" y="0" transform="translate(1161,193.5) rotate(90)" fill="#e0e0e0" font-size="22" textLength="245" lengthAdjust="spacingAndGlyphs">Percent/Percentage Point</text>
</svg>
<div id="dtbar"></div>
<div class="abs" style="left:8.7px;top:534px;font-size:15.8px;color:#eaeaea">Data Table</div>
<div class="btn" style="left:617px;width:122px"></div>
<div class="cb" style="left:623px;top:535px"><svg width="12" height="12" viewBox="0 0 12 12"><path d="M2.5 6.2l2.4 2.3 4.6-5" fill="none" stroke="#10243a" stroke-width="1.8"/></svg></div>
<div class="bt" style="left:640px;font-size:15px;">Show Weights</div>
<div class="btn" style="left:743.5px;width:131.5px"></div>
<div class="cb" style="left:749.5px;top:535px"><svg width="12" height="12" viewBox="0 0 12 12"><path d="M2.5 6.2l2.4 2.3 4.6-5" fill="none" stroke="#10243a" stroke-width="1.8"/></svg></div>
<div class="bt" style="left:766.5px;font-size:15px;">Show Heat Map</div>
<div class="btn" style="left:879.5px;width:119.0px"></div>
<div class="cb" style="left:885.5px;top:535px"><svg width="12" height="12" viewBox="0 0 12 12"><path d="M2.5 6.2l2.4 2.3 4.6-5" fill="none" stroke="#10243a" stroke-width="1.8"/></svg></div>
<div class="bt" style="left:902.5px;font-size:15.0px;letter-spacing:0.35px;">Show Tickers</div>
<div class="btn" style="left:1001.5px;width:94.0px"></div>
<svg style="position:absolute;left:1006.5px;top:535px" width="13" height="13" viewBox="0 0 12 12"><path d="M1 6l5-4 5 4M1 11l5-4 5 4" fill="none" stroke="#d8d8d8" stroke-width="1.6"/></svg>
<div class="bt" style="left:1024.0px;font-size:13.4px">Show More</div>
<div class="btn" style="left:1097.5px;width:92.0px"></div>
<svg style="position:absolute;left:1102.5px;top:535px" width="13" height="13" viewBox="0 0 12 12"><path d="M1 1l5 4 5-4M1 6l5 4 5-4" fill="none" stroke="#d8d8d8" stroke-width="1.6"/></svg>
<div class="bt" style="left:1120.0px;font-size:13.8px">Hide Table</div>
<div style="position:absolute;left:7px;top:551px;width:1183px;height:20px;background:#222222"></div>
<div style="position:absolute;left:452px;top:551px;width:738px;height:20px;background:#1c1c1c"></div>
<div style="position:absolute;left:7px;top:551px;width:1183px;height:1.5px;background:#383838"></div>
<div class="th" style="left:50px;top:551px">Series</div>
<svg style="position:absolute;left:8.5px;top:554.5px" width="14" height="14" viewBox="0 0 14 14"><path d="M7 3L11 7L7 11L3 7Z" fill="none" stroke="#e6e6e6" stroke-width="2.6"/><path d="M7 0.3v3.2M7 10.5v3.2M0.3 7h3.2M10.5 7h3.2" stroke="#e6e6e6" stroke-width="2.4"/></svg>
<div class="cb" style="left:32px;top:555.5px"><svg width="12" height="12" viewBox="0 0 12 12"><path d="M2.5 6.2l2.4 2.3 4.6-5" fill="none" stroke="#10243a" stroke-width="1.8"/></svg></div>
<div class="th" style="left:303.5px;top:551px">Ticker</div>
<div class="th thr" style="left:374.4px;top:551px;color:#c8c8c8">-23</div>
<div style="position:absolute;left:476.4px;top:551px;width:1px;height:20px;background:#151515"></div>
<div class="th thr" style="left:439.14px;top:551px;color:#c8c8c8">Nov-23</div>
<div style="position:absolute;left:541.14px;top:551px;width:1px;height:20px;background:#151515"></div>
<div class="th thr" style="left:503.88px;top:551px;color:#c8c8c8">Dec-23</div>
<div style="position:absolute;left:605.88px;top:551px;width:1px;height:20px;background:#151515"></div>
<div class="th thr" style="left:568.6199999999999px;top:551px;color:#c8c8c8">Jan-24</div>
<div style="position:absolute;left:670.6199999999999px;top:551px;width:1px;height:20px;background:#151515"></div>
<div class="th thr" style="left:633.3599999999999px;top:551px;color:#c8c8c8">Feb-24</div>
<div style="position:absolute;left:735.3599999999999px;top:551px;width:1px;height:20px;background:#151515"></div>
<div class="th thr" style="left:698.0999999999999px;top:551px;color:#c8c8c8">Mar-24</div>
<div style="position:absolute;left:800.0999999999999px;top:551px;width:1px;height:20px;background:#151515"></div>
<div class="th thr" style="left:762.8399999999999px;top:551px;color:#c8c8c8">Apr-24</div>
<div style="position:absolute;left:864.8399999999999px;top:551px;width:1px;height:20px;background:#151515"></div>
<div class="th thr" style="left:827.5799999999999px;top:551px;color:#c8c8c8">May-24</div>
<div style="position:absolute;left:929.5799999999999px;top:551px;width:1px;height:20px;background:#151515"></div>
<div class="th thr" style="left:892.3199999999999px;top:551px;color:#c8c8c8">Jun-24</div>
<div style="position:absolute;left:994.3199999999999px;top:551px;width:1px;height:20px;background:#151515"></div>
<div class="th thr" style="left:957.06px;top:551px;color:#c8c8c8">Jul-24</div>
<div style="position:absolute;left:1059.06px;top:551px;width:1px;height:20px;background:#151515"></div>
<svg style="position:absolute;left:1118px;top:555px" width="8" height="13" viewBox="0 0 8 13"><path d="M4 0.5V11M1 8l3 3.5 3-3.5" fill="none" stroke="#d0d0d0" stroke-width="1.6"/></svg>
<div class="th thr" style="left:1010.8px;top:551px;color:#e8a040">Aug-24</div>
<div style="position:absolute;left:1123.8px;top:551px;width:1px;height:20px;background:#151515"></div>
<div style="position:absolute;left:1085px;top:551px;color:#e8a040;" class="th"></div>
<div class="th thr" style="left:1087px;top:551px">Weight</div>
<svg style="position:absolute;left:9px;top:574.5px" width="14" height="14" viewBox="0 0 14 14"><path d="M3 4.5H8.5A3.6 3.6 0 0 1 8.5 11.7H3.5" fill="none" stroke="#e6e6e6" stroke-width="2"/><path d="M5.5 1.2L2 4.5L5.5 7.8" fill="none" stroke="#e6e6e6" stroke-width="2"/></svg>
<div class="cb" style="left:32px;top:575.0px"><svg width="12" height="12" viewBox="0 0 12 12"><path d="M2.5 6.2l2.4 2.3 4.6-5" fill="none" stroke="#10243a" stroke-width="1.8"/></svg></div>
<div class="tri" style="left:58px;top:571.0px">▼</div>
<div class="td" style="left:71px;top:571.0px;color:#ffffff">Core Services</div>
<div class="td tk" style="left:303.5px;top:571.0px;color:#ffffff">ECAN48RK Index</div>
<div style="position:absolute;left:453.0px;top:571.0px;width:24.4px;height:20.4px;background:#e8873f"></div>
<div class="tv" style="left:375.9px;top:571.0px;color:#241e1a;">336</div>
<div style="position:absolute;left:477.4px;top:571.0px;width:64.7px;height:20.4px;background:#e07a3a"></div>
<div class="tv" style="left:440.6px;top:571.0px;color:#241e1a;">0.459</div>
<div style="position:absolute;left:542.1px;top:571.0px;width:64.7px;height:20.4px;background:#ec9050"></div>
<div class="tv" style="left:505.4px;top:571.0px;color:#241e1a;">0.384</div>
<div style="position:absolute;left:606.9px;top:571.0px;width:64.7px;height:20.4px;background:#b82818"></div>
<div class="tv" style="left:570.1px;top:571.0px;color:#ffffff;-webkit-text-stroke:0.45px #fff;">0.661</div>
<div style="position:absolute;left:671.6px;top:571.0px;width:64.7px;height:20.4px;background:#e88040"></div>
<div class="tv" style="left:634.9px;top:571.0px;color:#241e1a;">0.457</div>
<div style="position:absolute;left:736.4px;top:571.0px;width:64.7px;height:20.4px;background:#d85a30"></div>
<div class="tv" style="left:699.6px;top:571.0px;color:#241e1a;">0.525</div>
<div style="position:absolute;left:801.1px;top:571.0px;width:64.7px;height:20.4px;background:#ec8a48"></div>
<div class="tv" style="left:764.3px;top:571.0px;color:#241e1a;">0.413</div>
<div style="position:absolute;left:865.8px;top:571.0px;width:64.7px;height:20.4px;background:#f2c0a0"></div>
<div class="tv" style="left:829.1px;top:571.0px;color:#241e1a;">0.219</div>
<div style="position:absolute;left:930.6px;top:571.0px;width:64.7px;height:20.4px;background:#f5d8c8"></div>
<div class="tv" style="left:893.8px;top:571.0px;color:#241e1a;">0.131</div>
<div style="position:absolute;left:995.3px;top:571.0px;width:64.7px;height:20.4px;background:#f0ac78"></div>
<div class="tv" style="left:958.6px;top:571.0px;color:#241e1a;">0.310</div>
<div style="position:absolute;left:1060.1px;top:571.0px;width:64.7px;height:20.4px;background:#ec8e4c"></div>
<div class="tv" style="left:1023.3px;top:571.0px;color:#241e1a;">0.406</div>
<div class="tv" style="left:1089px;top:571.0px;color:#ffffff;-webkit-text-stroke:0.3px #ffffff">100.000</div>
<div style="position:absolute;left:49px;top:590.6px;width:402px;height:1px;background:#2e2012"></div>
<svg style="position:absolute;left:8.5px;top:594.6px" width="14" height="14" viewBox="0 0 14 14"><path d="M7 3L11 7L7 11L3 7Z" fill="none" stroke="#e6e6e6" stroke-width="2.6"/><path d="M7 0.3v3.2M7 10.5v3.2M0.3 7h3.2M10.5 7h3.2" stroke="#e6e6e6" stroke-width="2.4"/></svg>
<div class="cb" style="left:32px;top:595.1px"><svg width="12" height="12" viewBox="0 0 12 12"><path d="M2.5 6.2l2.4 2.3 4.6-5" fill="none" stroke="#10243a" stroke-width="1.8"/></svg></div>
<div class="tri" style="left:69.5px;top:591.1px">▶</div>
<div class="td" style="left:84px;top:591.1px;color:#e8983a">Shelter</div>
<div class="td tk" style="left:303.5px;top:591.1px;color:#e8983a">ECAN3KWX Index</div>
<div style="position:absolute;left:453.0px;top:591.1px;width:24.4px;height:20.4px;background:#e98a45"></div>
<div class="tv" style="left:375.9px;top:591.1px;color:#241e1a;">202</div>
<div style="position:absolute;left:477.4px;top:591.1px;width:64.7px;height:20.4px;background:#e07838"></div>
<div class="tv" style="left:440.6px;top:591.1px;color:#241e1a;">0.265</div>
<div style="position:absolute;left:542.1px;top:591.1px;width:64.7px;height:20.4px;background:#e88a48"></div>
<div class="tv" style="left:505.4px;top:591.1px;color:#241e1a;">0.242</div>
<div style="position:absolute;left:606.9px;top:591.1px;width:64.7px;height:20.4px;background:#b82818"></div>
<div class="tv" style="left:570.1px;top:591.1px;color:#ffffff;-webkit-text-stroke:0.45px #fff;">0.377</div>
<div style="position:absolute;left:671.6px;top:591.1px;width:64.7px;height:20.4px;background:#e88a48"></div>
<div class="tv" style="left:634.9px;top:591.1px;color:#241e1a;">0.253</div>
<div style="position:absolute;left:736.4px;top:591.1px;width:64.7px;height:20.4px;background:#e88a48"></div>
<div class="tv" style="left:699.6px;top:591.1px;color:#241e1a;">0.248</div>
<div style="position:absolute;left:801.1px;top:591.1px;width:64.7px;height:20.4px;background:#ef9a58"></div>
<div class="tv" style="left:764.3px;top:591.1px;color:#241e1a;">0.224</div>
<div style="position:absolute;left:865.8px;top:591.1px;width:64.7px;height:20.4px;background:#e88040"></div>
<div class="tv" style="left:829.1px;top:591.1px;color:#241e1a;">0.239</div>
<div style="position:absolute;left:930.6px;top:591.1px;width:64.7px;height:20.4px;background:#f2c8a8"></div>
<div class="tv" style="left:893.8px;top:591.1px;color:#241e1a;">0.101</div>
<div style="position:absolute;left:995.3px;top:591.1px;width:64.7px;height:20.4px;background:#e8843e"></div>
<div class="tv" style="left:958.6px;top:591.1px;color:#241e1a;">0.225</div>
<div style="position:absolute;left:1060.1px;top:591.1px;width:64.7px;height:20.4px;background:#d8562c"></div>
<div class="tv" style="left:1023.3px;top:591.1px;color:#ffffff;-webkit-text-stroke:0.45px #fff;">0.310</div>
<div class="tv" style="left:1089px;top:591.1px;color:#e8df9c;-webkit-text-stroke:0.3px #e8df9c">59.479</div>
<div style="position:absolute;left:49px;top:610.7px;width:402px;height:1px;background:#2e2012"></div>
<svg style="position:absolute;left:8.5px;top:614.7px" width="14" height="14" viewBox="0 0 14 14"><path d="M7 3L11 7L7 11L3 7Z" fill="none" stroke="#e6e6e6" stroke-width="2.6"/><path d="M7 0.3v3.2M7 10.5v3.2M0.3 7h3.2M10.5 7h3.2" stroke="#e6e6e6" stroke-width="2.4"/></svg>
<div class="cb" style="left:32px;top:615.2px"><svg width="12" height="12" viewBox="0 0 12 12"><path d="M2.5 6.2l2.4 2.3 4.6-5" fill="none" stroke="#10243a" stroke-width="1.8"/></svg></div>
<div class="tri" style="left:69.5px;top:611.2px">▶</div>
<div class="td" style="left:84px;top:611.2px;color:#e8983a">Transportation Services</div>
<div class="td tk" style="left:303.5px;top:611.2px;color:#e8983a">ECANUFNZ Index</div>
<div style="position:absolute;left:453.0px;top:611.2px;width:24.4px;height:20.4px;background:#f0b088"></div>
<div class="tv" style="left:375.9px;top:611.2px;color:#241e1a;">091</div>
<div style="position:absolute;left:477.4px;top:611.2px;width:64.7px;height:20.4px;background:#eeb088"></div>
<div class="tv" style="left:440.6px;top:611.2px;color:#241e1a;">0.106</div>
<div style="position:absolute;left:542.1px;top:611.2px;width:64.7px;height:20.4px;background:#f4ecea"></div>
<div class="tv" style="left:505.4px;top:611.2px;color:#241e1a;">0.010</div>
<div style="position:absolute;left:606.9px;top:611.2px;width:64.7px;height:20.4px;background:#f2c8a8"></div>
<div class="tv" style="left:570.1px;top:611.2px;color:#241e1a;">0.100</div>
<div style="position:absolute;left:671.6px;top:611.2px;width:64.7px;height:20.4px;background:#ec9a60"></div>
<div class="tv" style="left:634.9px;top:611.2px;color:#241e1a;">0.143</div>
<div style="position:absolute;left:736.4px;top:611.2px;width:64.7px;height:20.4px;background:#ef9a5c"></div>
<div class="tv" style="left:699.6px;top:611.2px;color:#241e1a;">0.160</div>
<div style="position:absolute;left:801.1px;top:611.2px;width:64.7px;height:20.4px;background:#f2c8a8"></div>
<div class="tv" style="left:764.3px;top:611.2px;color:#241e1a;">0.092</div>
<div style="position:absolute;left:865.8px;top:611.2px;width:64.7px;height:20.4px;background:#d8dcf0"></div>
<div class="tv" style="left:829.1px;top:611.2px;color:#241e1a;">-0.054</div>
<div style="position:absolute;left:930.6px;top:611.2px;width:64.7px;height:20.4px;background:#d0d4ee"></div>
<div class="tv" style="left:893.8px;top:611.2px;color:#241e1a;">-0.059</div>
<div style="position:absolute;left:995.3px;top:611.2px;width:64.7px;height:20.4px;background:#f6e4da"></div>
<div class="tv" style="left:958.6px;top:611.2px;color:#241e1a;">0.044</div>
<div style="position:absolute;left:1060.1px;top:611.2px;width:64.7px;height:20.4px;background:#f2c09c"></div>
<div class="tv" style="left:1023.3px;top:611.2px;color:#241e1a;">0.094</div>
<div class="tv" style="left:1089px;top:611.2px;color:#e8df9c;-webkit-text-stroke:0.3px #e8df9c">10.557</div>
<div style="position:absolute;left:49px;top:630.8px;width:402px;height:1px;background:#2e2012"></div>
<svg style="position:absolute;left:8.5px;top:634.8px" width="14" height="14" viewBox="0 0 14 14"><path d="M7 3L11 7L7 11L3 7Z" fill="none" stroke="#e6e6e6" stroke-width="2.6"/><path d="M7 0.3v3.2M7 10.5v3.2M0.3 7h3.2M10.5 7h3.2" stroke="#e6e6e6" stroke-width="2.4"/></svg>
<div class="cb" style="left:32px;top:635.3px"><svg width="12" height="12" viewBox="0 0 12 12"><path d="M2.5 6.2l2.4 2.3 4.6-5" fill="none" stroke="#10243a" stroke-width="1.8"/></svg></div>
<div class="tri" style="left:69.5px;top:631.3px">▶</div>
<div class="td" style="left:84px;top:631.3px;color:#e8983a">Education And Communicatio…</div>
<div class="td tk" style="left:303.5px;top:631.3px;color:#e8983a">ECAN40F6 Index</div>
<div style="position:absolute;left:453.0px;top:631.3px;width:24.4px;height:20.4px;background:#f8f0ec"></div>
<div class="tv" style="left:375.9px;top:631.3px;color:#241e1a;">002</div>
<div style="position:absolute;left:477.4px;top:631.3px;width:64.7px;height:20.4px;background:#f6e8e0"></div>
<div class="tv" style="left:440.6px;top:631.3px;color:#241e1a;">0.008</div>
<div style="position:absolute;left:542.1px;top:631.3px;width:64.7px;height:20.4px;background:#f5dac8"></div>
<div class="tv" style="left:505.4px;top:631.3px;color:#241e1a;">0.013</div>
<div style="position:absolute;left:606.9px;top:631.3px;width:64.7px;height:20.4px;background:#f0c8a8"></div>
<div class="tv" style="left:570.1px;top:631.3px;color:#241e1a;">0.034</div>
<div style="position:absolute;left:671.6px;top:631.3px;width:64.7px;height:20.4px;background:#f2c8a8"></div>
<div class="tv" style="left:634.9px;top:631.3px;color:#241e1a;">0.037</div>
<div style="position:absolute;left:736.4px;top:631.3px;width:64.7px;height:20.4px;background:#f4e0d4"></div>
<div class="tv" style="left:699.6px;top:631.3px;color:#241e1a;">0.016</div>
<div style="position:absolute;left:801.1px;top:631.3px;width:64.7px;height:20.4px;background:#f4d8c4"></div>
<div class="tv" style="left:764.3px;top:631.3px;color:#241e1a;">0.019</div>
<div style="position:absolute;left:865.8px;top:631.3px;width:64.7px;height:20.4px;background:#f2cab0"></div>
<div class="tv" style="left:829.1px;top:631.3px;color:#241e1a;">0.021</div>
<div style="position:absolute;left:930.6px;top:631.3px;width:64.7px;height:20.4px;background:#f8f4f2"></div>
<div class="tv" style="left:893.8px;top:631.3px;color:#241e1a;">0.000</div>
<div style="position:absolute;left:995.3px;top:631.3px;width:64.7px;height:20.4px;background:#f4e2d6"></div>
<div class="tv" style="left:958.6px;top:631.3px;color:#241e1a;">0.013</div>
<div style="position:absolute;left:1060.1px;top:631.3px;width:64.7px;height:20.4px;background:#f4e0d2"></div>
<div class="tv" style="left:1023.3px;top:631.3px;color:#241e1a;">0.014</div>
<div class="tv" style="left:1089px;top:631.3px;color:#e8df9c;-webkit-text-stroke:0.3px #e8df9c">8.147</div>
<div style="position:absolute;left:49px;top:650.9px;width:402px;height:1px;background:#2e2012"></div>
<svg style="position:absolute;left:8.5px;top:654.9px" width="14" height="14" viewBox="0 0 14 14"><path d="M7 3L11 7L7 11L3 7Z" fill="none" stroke="#e6e6e6" stroke-width="2.6"/><path d="M7 0.3v3.2M7 10.5v3.2M0.3 7h3.2M10.5 7h3.2" stroke="#e6e6e6" stroke-width="2.4"/></svg>
<div class="cb" style="left:32px;top:655.4px"><svg width="12" height="12" viewBox="0 0 12 12"><path d="M2.5 6.2l2.4 2.3 4.6-5" fill="none" stroke="#10243a" stroke-width="1.8"/></svg></div>
<div class="tri" style="left:69.5px;top:651.4px">▶</div>
<div class="td" style="left:84px;top:651.4px;color:#e8983a">Other Personal Services</div>
<div class="td tk" style="left:303.5px;top:651.4px;color:#e8983a">ECAN7NED Index</div>
<div style="position:absolute;left:453.0px;top:651.4px;width:24.4px;height:20.4px;background:#f3d2bc"></div>
<div class="tv" style="left:375.9px;top:651.4px;color:#241e1a;">006</div>
<div style="position:absolute;left:477.4px;top:651.4px;width:64.7px;height:20.4px;background:#f2d0b8"></div>
<div class="tv" style="left:440.6px;top:651.4px;color:#241e1a;">0.007</div>
<div style="position:absolute;left:542.1px;top:651.4px;width:64.7px;height:20.4px;background:#f5e0d0"></div>
<div class="tv" style="left:505.4px;top:651.4px;color:#241e1a;">0.003</div>
<div style="position:absolute;left:606.9px;top:651.4px;width:64.7px;height:20.4px;background:#e58040"></div>
<div class="tv" style="left:570.1px;top:651.4px;color:#241e1a;">0.024</div>
<div style="position:absolute;left:671.6px;top:651.4px;width:64.7px;height:20.4px;background:#3a3a80"></div>
<div class="tv" style="left:634.9px;top:651.4px;color:#ffffff;">-0.016</div>
<div style="position:absolute;left:736.4px;top:651.4px;width:64.7px;height:20.4px;background:#ec9050"></div>
<div class="tv" style="left:699.6px;top:651.4px;color:#241e1a;">0.019</div>
<div style="position:absolute;left:801.1px;top:651.4px;width:64.7px;height:20.4px;background:#d65a2e"></div>
<div class="tv" style="left:764.3px;top:651.4px;color:#241e1a;">0.026</div>
<div style="position:absolute;left:865.8px;top:651.4px;width:64.7px;height:20.4px;background:#7a78c8"></div>
<div class="tv" style="left:829.1px;top:651.4px;color:#241e1a;">-0.008</div>
<div style="position:absolute;left:930.6px;top:651.4px;width:64.7px;height:20.4px;background:#e5783a"></div>
<div class="tv" style="left:893.8px;top:651.4px;color:#241e1a;">0.023</div>
<div style="position:absolute;left:995.3px;top:651.4px;width:64.7px;height:20.4px;background:#f2d4c0"></div>
<div class="tv" style="left:958.6px;top:651.4px;color:#241e1a;">0.007</div>
<div style="position:absolute;left:1060.1px;top:651.4px;width:64.7px;height:20.4px;background:#f4e0d2"></div>
<div class="tv" style="left:1023.3px;top:651.4px;color:#241e1a;">0.005</div>
<div class="tv" style="left:1089px;top:651.4px;color:#e8df9c;-webkit-text-stroke:0.3px #e8df9c">2.507</div>
<div style="position:absolute;left:49px;top:671.0px;width:402px;height:1px;background:#2e2012"></div>
<svg style="position:absolute;left:8.5px;top:675.0px" width="14" height="14" viewBox="0 0 14 14"><path d="M7 3L11 7L7 11L3 7Z" fill="none" stroke="#e6e6e6" stroke-width="2.6"/><path d="M7 0.3v3.2M7 10.5v3.2M0.3 7h3.2M10.5 7h3.2" stroke="#e6e6e6" stroke-width="2.4"/></svg>
<div class="cb" style="left:32px;top:675.5px"><svg width="12" height="12" viewBox="0 0 12 12"><path d="M2.5 6.2l2.4 2.3 4.6-5" fill="none" stroke="#10243a" stroke-width="1.8"/></svg></div>
<div class="tri" style="left:69.5px;top:671.5px">▶</div>
<div class="td" style="left:84px;top:671.5px;color:#e8983a">Water, Sewer and Trash Colle…</div>
<div class="td tk" style="left:303.5px;top:671.5px;color:#e8983a">ECANJEN7 Index</div>
<div style="position:absolute;left:453.0px;top:671.5px;width:24.4px;height:20.4px;background:#f0c0a0"></div>
<div class="tv" style="left:375.9px;top:671.5px;color:#241e1a;">004</div>
<div style="position:absolute;left:477.4px;top:671.5px;width:64.7px;height:20.4px;background:#f0c09a"></div>
<div class="tv" style="left:440.6px;top:671.5px;color:#241e1a;">0.007</div>
<div style="position:absolute;left:542.1px;top:671.5px;width:64.7px;height:20.4px;background:#f4d8c5"></div>
<div class="tv" style="left:505.4px;top:671.5px;color:#241e1a;">0.003</div>
<div style="position:absolute;left:606.9px;top:671.5px;width:64.7px;height:20.4px;background:#a81810"></div>
<div class="tv" style="left:570.1px;top:671.5px;color:#ffffff;-webkit-text-stroke:0.45px #fff;">0.020</div>
<div style="position:absolute;left:671.6px;top:671.5px;width:64.7px;height:20.4px;background:#f0b88c"></div>
<div class="tv" style="left:634.9px;top:671.5px;color:#241e1a;">0.008</div>
<div style="position:absolute;left:736.4px;top:671.5px;width:64.7px;height:20.4px;background:#f2cdb4"></div>
<div class="tv" style="left:699.6px;top:671.5px;color:#241e1a;">0.005</div>
<div style="position:absolute;left:801.1px;top:671.5px;width:64.7px;height:20.4px;background:#f0bc98"></div>
<div class="tv" style="left:764.3px;top:671.5px;color:#241e1a;">0.007</div>
<div style="position:absolute;left:865.8px;top:671.5px;width:64.7px;height:20.4px;background:#f5e4da"></div>
<div class="tv" style="left:829.1px;top:671.5px;color:#241e1a;">0.002</div>
<div style="position:absolute;left:930.6px;top:671.5px;width:64.7px;height:20.4px;background:#f2c8a8"></div>
<div class="tv" style="left:893.8px;top:671.5px;color:#241e1a;">0.004</div>
<div style="position:absolute;left:995.3px;top:671.5px;width:64.7px;height:20.4px;background:#f0b080"></div>
<div class="tv" style="left:958.6px;top:671.5px;color:#241e1a;">0.008</div>
<div style="position:absolute;left:1060.1px;top:671.5px;width:64.7px;height:20.4px;background:#f3dccb"></div>
<div class="tv" style="left:1023.3px;top:671.5px;color:#241e1a;">0.003</div>
<div class="tv" style="left:1089px;top:671.5px;color:#e8df9c;-webkit-text-stroke:0.3px #e8df9c">1.785</div>
<div style="position:absolute;left:49px;top:691.1px;width:402px;height:1px;background:#2e2012"></div>
<svg style="position:absolute;left:8.5px;top:695.1px" width="14" height="14" viewBox="0 0 14 14"><path d="M7 3L11 7L7 11L3 7Z" fill="none" stroke="#e6e6e6" stroke-width="2.6"/><path d="M7 0.3v3.2M7 10.5v3.2M0.3 7h3.2M10.5 7h3.2" stroke="#e6e6e6" stroke-width="2.4"/></svg>
<div class="cb" style="left:32px;top:695.6px"><svg width="12" height="12" viewBox="0 0 12 12"><path d="M2.5 6.2l2.4 2.3 4.6-5" fill="none" stroke="#10243a" stroke-width="1.8"/></svg></div>
<div class="tri" style="left:69.5px;top:691.6px">▶</div>
<div class="td" style="left:84px;top:691.6px;color:#e8983a">Recreation Services</div>
<div class="td tk" style="left:303.5px;top:691.6px;color:#e8983a">ECAN7MD4 Index</div>
<div style="position:absolute;left:453.0px;top:691.6px;width:24.4px;height:20.4px;background:#f5e8e2"></div>
<div class="tv" style="left:375.9px;top:691.6px;color:#241e1a;">006</div>
<div style="position:absolute;left:477.4px;top:691.6px;width:64.7px;height:20.4px;background:#f5ece8"></div>
<div class="tv" style="left:440.6px;top:691.6px;color:#241e1a;">0.003</div>
<div style="position:absolute;left:542.1px;top:691.6px;width:64.7px;height:20.4px;background:#d4552a"></div>
<div class="tv" style="left:505.4px;top:691.6px;color:#ffffff;-webkit-text-stroke:0.45px #fff;">0.061</div>
<div style="position:absolute;left:606.9px;top:691.6px;width:64.7px;height:20.4px;background:#f2c4a4"></div>
<div class="tv" style="left:570.1px;top:691.6px;color:#241e1a;">0.021</div>
<div style="position:absolute;left:671.6px;top:691.6px;width:64.7px;height:20.4px;background:#f0c098"></div>
<div class="tv" style="left:634.9px;top:691.6px;color:#241e1a;">0.024</div>
<div style="position:absolute;left:736.4px;top:691.6px;width:64.7px;height:20.4px;background:#f6eeea"></div>
<div class="tv" style="left:699.6px;top:691.6px;color:#241e1a;">0.003</div>
<div style="position:absolute;left:801.1px;top:691.6px;width:64.7px;height:20.4px;background:#f3d4c0"></div>
<div class="tv" style="left:764.3px;top:691.6px;color:#241e1a;">0.018</div>
<div style="position:absolute;left:865.8px;top:691.6px;width:64.7px;height:20.4px;background:#d6d6ee"></div>
<div class="tv" style="left:829.1px;top:691.6px;color:#241e1a;">-0.011</div>
<div style="position:absolute;left:930.6px;top:691.6px;width:64.7px;height:20.4px;background:#e0e0f0"></div>
<div class="tv" style="left:893.8px;top:691.6px;color:#241e1a;">-0.006</div>
<div style="position:absolute;left:995.3px;top:691.6px;width:64.7px;height:20.4px;background:#f2c8aa"></div>
<div class="tv" style="left:958.6px;top:691.6px;color:#241e1a;">0.022</div>
<div style="position:absolute;left:1060.1px;top:691.6px;width:64.7px;height:20.4px;background:#f6f0ee"></div>
<div class="tv" style="left:1023.3px;top:691.6px;color:#241e1a;">0.001</div>
<div class="tv" style="left:1089px;top:691.6px;color:#e8df9c;-webkit-text-stroke:0.3px #e8df9c">5.287</div>
<div style="position:absolute;left:49px;top:711.2px;width:402px;height:1px;background:#2e2012"></div>
<svg style="position:absolute;left:8.5px;top:715.2px" width="14" height="14" viewBox="0 0 14 14"><path d="M7 3L11 7L7 11L3 7Z" fill="none" stroke="#e6e6e6" stroke-width="2.6"/><path d="M7 0.3v3.2M7 10.5v3.2M0.3 7h3.2M10.5 7h3.2" stroke="#e6e6e6" stroke-width="2.4"/></svg>
<div class="cb" style="left:32px;top:715.7px"><svg width="12" height="12" viewBox="0 0 12 12"><path d="M2.5 6.2l2.4 2.3 4.6-5" fill="none" stroke="#10243a" stroke-width="1.8"/></svg></div>
<div class="tri" style="left:69.5px;top:711.7px">▶</div>
<div class="td" style="left:84px;top:711.7px;color:#e8983a">Medical Care Services</div>
<div class="td tk" style="left:303.5px;top:711.7px;color:#e8983a">ECAN3VNF Index</div>
<div style="position:absolute;left:453.0px;top:711.7px;width:24.4px;height:20.4px;background:#f0b890"></div>
<div class="tv" style="left:375.9px;top:711.7px;color:#241e1a;">022</div>
<div style="position:absolute;left:477.4px;top:711.7px;width:64.7px;height:20.4px;background:#ef9a58"></div>
<div class="tv" style="left:440.6px;top:711.7px;color:#241e1a;">0.054</div>
<div style="position:absolute;left:542.1px;top:711.7px;width:64.7px;height:20.4px;background:#ef9a58"></div>
<div class="tv" style="left:505.4px;top:711.7px;color:#241e1a;">0.054</div>
<div style="position:absolute;left:606.9px;top:711.7px;width:64.7px;height:20.4px;background:#e07838"></div>
<div class="tv" style="left:570.1px;top:711.7px;color:#241e1a;">0.074</div>
<div style="position:absolute;left:671.6px;top:711.7px;width:64.7px;height:20.4px;background:#e4e4f0"></div>
<div class="tv" style="left:634.9px;top:711.7px;color:#241e1a;">-0.006</div>
<div style="position:absolute;left:736.4px;top:711.7px;width:64.7px;height:20.4px;background:#e88040"></div>
<div class="tv" style="left:699.6px;top:711.7px;color:#241e1a;">0.059</div>
<div style="position:absolute;left:801.1px;top:711.7px;width:64.7px;height:20.4px;background:#ef9a5c"></div>
<div class="tv" style="left:764.3px;top:711.7px;color:#241e1a;">0.047</div>
<div style="position:absolute;left:865.8px;top:711.7px;width:64.7px;height:20.4px;background:#f0c098"></div>
<div class="tv" style="left:829.1px;top:711.7px;color:#241e1a;">0.036</div>
<div style="position:absolute;left:930.6px;top:711.7px;width:64.7px;height:20.4px;background:#f3d8c6"></div>
<div class="tv" style="left:893.8px;top:711.7px;color:#241e1a;">0.018</div>
<div style="position:absolute;left:995.3px;top:711.7px;width:64.7px;height:20.4px;background:#7a78c8"></div>
<div class="tv" style="left:958.6px;top:711.7px;color:#241e1a;">-0.036</div>
<div style="position:absolute;left:1060.1px;top:711.7px;width:64.7px;height:20.4px;background:#e2e2f0"></div>
<div class="tv" style="left:1023.3px;top:711.7px;color:#241e1a;">-0.010</div>
<div class="tv" style="left:1089px;top:711.7px;color:#e8df9c;-webkit-text-stroke:0.3px #e8df9c">10.588</div>
<div style="position:absolute;left:49px;top:731.3px;width:402px;height:1px;background:#2e2012"></div>
<svg style="position:absolute;left:8.5px;top:735.3px" width="14" height="14" viewBox="0 0 14 14"><path d="M7 3L11 7L7 11L3 7Z" fill="none" stroke="#e6e6e6" stroke-width="2.6"/><path d="M7 0.3v3.2M7 10.5v3.2M0.3 7h3.2M10.5 7h3.2" stroke="#e6e6e6" stroke-width="2.4"/></svg>
<div class="cb" style="left:32px;top:735.8px"><svg width="12" height="12" viewBox="0 0 12 12"><path d="M2.5 6.2l2.4 2.3 4.6-5" fill="none" stroke="#10243a" stroke-width="1.8"/></svg></div>
<div class="tri" style="left:69.5px;top:731.8px">▶</div>
<div class="td" style="left:84px;top:731.8px;color:#e8983a">Household Operations</div>
<div class="td tk" style="left:303.5px;top:731.8px;color:#e8983a">ECANM8ZT Index</div>
<div style="position:absolute;left:736.4px;top:731.8px;width:64.7px;height:20.4px;background:#f0c4a0"></div>
<div class="tv" style="left:699.6px;top:731.8px;color:#241e1a;">0.013</div>
<div style="position:absolute;left:801.1px;top:731.8px;width:64.7px;height:20.4px;background:#3c3c88"></div>
<div class="tv" style="left:764.3px;top:731.8px;color:#ffffff;">-0.020</div>
<div style="position:absolute;left:476.4px;top:571px;width:1px;height:187px;background:rgba(50,50,50,0.75)"></div>
<div style="position:absolute;left:541.1px;top:571px;width:1px;height:187px;background:rgba(50,50,50,0.75)"></div>
<div style="position:absolute;left:605.9px;top:571px;width:1px;height:187px;background:rgba(50,50,50,0.75)"></div>
<div style="position:absolute;left:670.6px;top:571px;width:1px;height:187px;background:rgba(50,50,50,0.75)"></div>
<div style="position:absolute;left:735.4px;top:571px;width:1px;height:187px;background:rgba(50,50,50,0.75)"></div>
<div style="position:absolute;left:800.1px;top:571px;width:1px;height:187px;background:rgba(50,50,50,0.75)"></div>
<div style="position:absolute;left:864.8px;top:571px;width:1px;height:187px;background:rgba(50,50,50,0.75)"></div>
<div style="position:absolute;left:929.6px;top:571px;width:1px;height:187px;background:rgba(50,50,50,0.75)"></div>
<div style="position:absolute;left:994.3px;top:571px;width:1px;height:187px;background:rgba(50,50,50,0.75)"></div>
<div style="position:absolute;left:1059.1px;top:571px;width:1px;height:187px;background:rgba(50,50,50,0.75)"></div>
<div style="position:absolute;left:1123.8px;top:571px;width:1px;height:187px;background:rgba(50,50,50,0.75)"></div>
<div style="position:absolute;left:7px;top:551px;width:1px;height:207px;background:#3a3a3a"></div>
<div style="position:absolute;left:1189.5px;top:551px;width:1px;height:207px;background:#333"></div>
<div style="position:absolute;left:24px;top:551px;width:1px;height:207px;background:#333"></div>
<div style="position:absolute;left:48px;top:551px;width:1px;height:207px;background:#333"></div>
<div style="position:absolute;left:301px;top:551px;width:1px;height:207px;background:#333"></div>
</body></html>
